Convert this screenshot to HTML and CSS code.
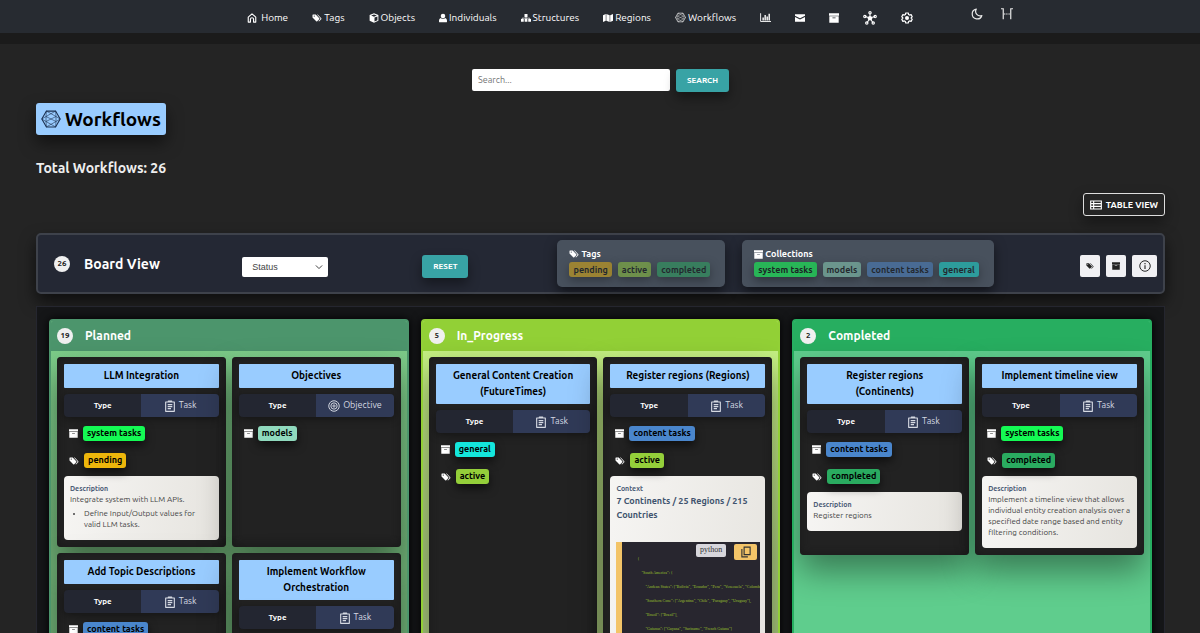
FILE: index.html
```html
<!DOCTYPE html>
<html lang="en">
<head>
    <meta charset="UTF-8">
    <meta name="viewport" content="width=device-width, initial-scale=1.0">
    <title>Workflows</title>
    <link rel="stylesheet" href="styles.css">
</head>
<body>
    <!-- Shared icons -->
    <svg class="sprite" aria-hidden="true">
        <symbol id="i-home" viewBox="0 0 16 16"><path d="M2 6.500 8 1.500l6 5V14.500h-3.500V10a2.500 2.500 0 0 0-5 0v4.500H2z" fill="none" stroke="currentColor" stroke-width="1.800" stroke-linejoin="round"/></symbol>
        <symbol id="i-tags" viewBox="0 0 20 16"><path d="M1 2v5l7.500 7.500q1 .8 2 0l4-4q.8-1 0-2L7.500 1H2q-1 0-1 1zm3.500 1a1.200 1.200 0 1 1 0 2.400 1.200 1.200 0 0 1 0-2.400z" fill="currentColor" fill-rule="evenodd"/><path d="M10 1h1.500l7 7.500q1 1 0 2L14 15l-1-1 3.500-3.500q.8-1 0-2z" fill="currentColor"/></symbol>
        <symbol id="i-cube" viewBox="0 0 16 16"><path d="M8 .5 15 3v9.500L8 15.500 1 12.500V3zM8 2.300 3.500 4 8 5.800 12.500 4zM8.800 7.300v6.200l4.700-2V5.500z" fill="currentColor" fill-rule="evenodd"/></symbol>
        <symbol id="i-user" viewBox="0 0 14 16"><circle cx="7" cy="4.500" r="4" fill="currentColor"/><path d="M3 8q4 3 8 0 3 1 3 4.500V14q0 1.500-1.500 1.500h-11Q0 15.500 0 14v-1.500Q0 9 3 8z" fill="currentColor"/></symbol>
        <symbol id="i-sitemap" viewBox="0 0 20 16"><path d="M7 0h6v6H7zM0 10h5.500v5.500H0zM7.300 10h5.500v5.500H7.300zM14.500 10H20v5.500h-5.500z" fill="currentColor"/><path d="M10 5v6M2.500 11V8.300h15V11" fill="none" stroke="currentColor" stroke-width="1.500"/></symbol>
        <symbol id="i-map" viewBox="0 0 18 16"><path d="M0 3 5 1v12l-5 2zM6 1l6 2v12l-6-2zM13 3l5-2v12l-5 2z" fill="currentColor"/></symbol>
        <symbol id="i-mesh" viewBox="0 0 24 24"><path d="M6.500 2.500h11L23 12l-5.500 9.500h-11L1 12z" fill="none" stroke="currentColor" stroke-width="1.300"/><path d="M6.500 2.500 18 9l5 3-5 3-11.500 6.500L6 15l-5-3 5-3zM17.500 2.500 6 9v6l11.500 6.500L18 15V9zM6 9l12 6M18 9 6 15" fill="none" stroke="currentColor" stroke-width=".7"/></symbol>
        <symbol id="i-chart" viewBox="0 0 18 16"><path d="M1 1v13.500h17" fill="none" stroke="currentColor" stroke-width="1.500"/><path d="M4 8h2.300v5H4zM7.300 4h2.300v9H7.300zM10.600 6.500h2.300V13h-2.300zM13.900 2h2.300v11h-2.300z" fill="currentColor"/></symbol>
        <symbol id="i-mail" viewBox="0 0 16 14"><path d="M0 1h16v2.500l-8 4-8-4zM0 5.500l8 4 8-4V13H0z" fill="currentColor"/></symbol>
        <symbol id="i-archive" viewBox="0 0 16 16"><path d="M0 .5h16v4H0zM.5 5.200h15v10.300H.5zM5.500 7v1.200h5V7z" fill="currentColor" fill-rule="evenodd"/></symbol>
        <symbol id="i-hub" viewBox="0 0 24 24"><path d="M12 12V4M12 12 3.500 9.500M12 12l8.500-2.500M12 12l-5 8M12 12l5 8" stroke="currentColor" stroke-width="1.800"/><circle cx="12" cy="12.500" r="3.800" fill="currentColor"/><g fill="none" stroke="currentColor" stroke-width="2"><circle cx="12" cy="3.200" r="2"/><circle cx="3.200" cy="9.500" r="2"/><circle cx="20.800" cy="9.500" r="2"/><circle cx="6.500" cy="20.500" r="2"/><circle cx="17.500" cy="20.500" r="2"/></g></symbol>
        <symbol id="i-gear" viewBox="0 0 24 24"><path d="M9.500 2h5l.7 3 2 1.200 3-1 2.300 4.200L20.200 12l2.300 2.600-2.300 4.200-3-1-2 1.200-.7 3h-5l-.7-3-2-1.200-3 1-2.300-4.200L3.800 12 1.500 9.400l2.300-4.200 3 1 2-1.200z" fill="none" stroke="currentColor" stroke-width="2.400" stroke-linejoin="round"/><circle cx="12" cy="12" r="4" fill="currentColor"/></symbol>
        <symbol id="i-moon" viewBox="0 0 16 16"><path d="M7 1.500a6.600 6.600 0 1 0 7.500 8.500A6 6 0 0 1 7 1.500z" fill="none" stroke="currentColor" stroke-width="1.600" stroke-linejoin="round"/></symbol>
        <symbol id="i-width" viewBox="0 0 16 16"><path d="M0 1h3v14M16 1h-3v14" fill="none" stroke="currentColor" stroke-width="1.600"/><path d="M4 8h8" stroke="currentColor" stroke-width="1.600" stroke-dasharray="1.500 .8"/></symbol>
        <symbol id="i-table" viewBox="0 0 18 14"><path d="M1 1h16v12H1zM1 5h16M1 9h16M5.500 1v12" fill="none" stroke="currentColor" stroke-width="1.700"/></symbol>
        <symbol id="i-info" viewBox="0 0 16 16"><circle cx="8" cy="8" r="7" fill="none" stroke="currentColor" stroke-width="1.300"/><path d="M8 7v5M8 4v1.500" stroke="currentColor" stroke-width="1.500"/></symbol>
        <symbol id="i-task" viewBox="0 0 16 18"><path d="M1.500 3h13v14h-13zM5.500 3V1.500h5V3M4.500 7h7M4.500 10h7M4.500 13h5" fill="none" stroke="currentColor" stroke-width="1.700" stroke-linejoin="round"/></symbol>
        <symbol id="i-target" viewBox="0 0 16 16"><g fill="none" stroke="currentColor" stroke-width="1.300"><circle cx="8" cy="8" r="7"/><circle cx="8" cy="8" r="4.200"/><circle cx="8" cy="8" r="1.500"/></g></symbol>
        <symbol id="i-copy" viewBox="0 0 16 16"><path d="M5.500 1.500h8v10h-8zM2.500 4v10.500h8" fill="none" stroke="currentColor" stroke-width="1.500"/></symbol>
        <symbol id="i-chevron" viewBox="0 0 16 16"><path d="M3 5.500l5 5 5-5" fill="none" stroke="currentColor" stroke-width="1.600"/></symbol>
    </svg>

    <header class="navbar">
        <nav class="nav-links">
            <a href="#"><svg class="icon"><use href="#i-home"/></svg>&nbsp;Home</a>
            <a href="#"><svg class="icon"><use href="#i-tags"/></svg>Tags</a>
            <a href="#"><svg class="icon"><use href="#i-cube"/></svg>Objects</a>
            <a href="#"><svg class="icon icon-slim"><use href="#i-user"/></svg>Individuals</a>
            <a href="#"><svg class="icon"><use href="#i-sitemap"/></svg>Structures</a>
            <a href="#"><svg class="icon"><use href="#i-map"/></svg>Regions</a>
            <a href="#"><svg class="icon icon-wide"><use href="#i-mesh"/></svg>Workflows</a>
            <a href="#" aria-label="Statistics"><svg class="icon icon-wide"><use href="#i-chart"/></svg></a>
            <a href="#" aria-label="Messages"><svg class="icon"><use href="#i-mail"/></svg></a>
            <a href="#" aria-label="Collections"><svg class="icon"><use href="#i-archive"/></svg></a>
            <a href="#" aria-label="Network"><svg class="icon icon-lg"><use href="#i-hub"/></svg></a>
            <a href="#" aria-label="Settings"><svg class="icon icon-md"><use href="#i-gear"/></svg></a>
        </nav>
        <div class="nav-toggles">
            <button type="button" aria-label="Dark mode"><svg class="icon icon-md"><use href="#i-moon"/></svg></button>
            <button type="button" aria-label="Page width"><svg class="icon icon-md"><use href="#i-width"/></svg></button>
        </div>
    </header>

    <main>
        <form class="search">
            <input type="search" placeholder="Search..." aria-label="Search">
            <button type="submit" class="btn btn-teal">SEARCH</button>
        </form>

        <h1><svg class="icon"><use href="#i-mesh"/></svg>Workflows</h1>
        <h2 class="total">Total Workflows: 26</h2>

        <div class="view-switch">
            <a href="#" class="btn-outline"><svg class="icon"><use href="#i-table"/></svg>TABLE VIEW</a>
        </div>

        <section class="toolbar">
            <div class="toolbar-title">
                <span class="count">26</span>
                <h2>Board View</h2>
            </div>
            <div>
                <div class="select">
                    <select aria-label="Group by">
                        <option>Status</option>
                        <option>Type</option>
                    </select>
                    <svg class="icon"><use href="#i-chevron"/></svg>
                </div>
            </div>
            <div><button type="button" class="btn btn-teal btn-reset">RESET</button></div>
            <div class="filter">
                <h3><svg class="icon"><use href="#i-tags"/></svg>Tags</h3>
                <div class="filter-list">
                    <button type="button" class="tag pending">pending</button>
                    <button type="button" class="tag active">active</button>
                    <button type="button" class="tag completed">completed</button>
                </div>
            </div>
            <div class="filter">
                <h3><svg class="icon icon-sm"><use href="#i-archive"/></svg>Collections</h3>
                <div class="filter-list">
                    <button type="button" class="tag system">system tasks</button>
                    <button type="button" class="tag models">models</button>
                    <button type="button" class="tag content">content tasks</button>
                    <button type="button" class="tag general">general</button>
                </div>
            </div>
            <div class="toolbar-actions">
                <button type="button" aria-label="Toggle tags"><svg class="icon icon-xs"><use href="#i-tags"/></svg></button>
                <button type="button" aria-label="Toggle collections"><svg class="icon icon-xs"><use href="#i-archive"/></svg></button>
                <button type="button" class="info" aria-label="Toggle details"><svg class="icon icon-md"><use href="#i-info"/></svg></button>
            </div>
        </section>

        <section class="board">
            <!-- Planned -->
            <div class="column planned">
                <header><span class="count">19</span><h2>Planned</h2></header>
                <div class="cards">
                    <article class="card">
                        <h3><a href="#">LLM Integration</a></h3>
                        <div class="type"><b>Type</b><span><svg class="icon icon-md"><use href="#i-task"/></svg>Task</span></div>
                        <p class="label"><svg class="icon icon-sm"><use href="#i-archive"/></svg><a href="#" class="tag system">system tasks</a></p>
                        <p class="label"><svg class="icon"><use href="#i-tags"/></svg><a href="#" class="tag pending">pending</a></p>
                        <div class="note">
                            <h4>Description</h4>
                            <p>Integrate system with LLM APIs.</p>
                            <ul>
                                <li>Define Input/Output values for valid LLM tasks.</li>
                            </ul>
                        </div>
                    </article>
                    <article class="card">
                        <h3><a href="#">Objectives</a></h3>
                        <div class="type"><b>Type</b><span><svg class="icon icon-md"><use href="#i-target"/></svg>Objective</span></div>
                        <p class="label"><svg class="icon icon-sm"><use href="#i-archive"/></svg><a href="#" class="tag models">models</a></p>
                    </article>
                    <article class="card">
                        <h3><a href="#">Add Topic Descriptions</a></h3>
                        <div class="type"><b>Type</b><span><svg class="icon icon-md"><use href="#i-task"/></svg>Task</span></div>
                        <p class="label"><svg class="icon icon-sm"><use href="#i-archive"/></svg><a href="#" class="tag content">content tasks</a></p>
                    </article>
                    <article class="card">
                        <h3><a href="#">Implement Workflow Orchestration</a></h3>
                        <div class="type"><b>Type</b><span><svg class="icon icon-md"><use href="#i-task"/></svg>Task</span></div>
                    </article>
                </div>
            </div>

            <!-- In progress -->
            <div class="column in-progress">
                <header><span class="count">5</span><h2>In_Progress</h2></header>
                <div class="cards">
                    <article class="card">
                        <h3><a href="#">General Content Creation (FutureTimes)</a></h3>
                        <div class="type"><b>Type</b><span><svg class="icon icon-md"><use href="#i-task"/></svg>Task</span></div>
                        <p class="label"><svg class="icon icon-sm"><use href="#i-archive"/></svg><a href="#" class="tag general">general</a></p>
                        <p class="label"><svg class="icon"><use href="#i-tags"/></svg><a href="#" class="tag active">active</a></p>
                    </article>
                    <article class="card">
                        <h3><a href="#">Register regions (Regions)</a></h3>
                        <div class="type"><b>Type</b><span><svg class="icon icon-md"><use href="#i-task"/></svg>Task</span></div>
                        <p class="label"><svg class="icon icon-sm"><use href="#i-archive"/></svg><a href="#" class="tag content">content tasks</a></p>
                        <p class="label"><svg class="icon"><use href="#i-tags"/></svg><a href="#" class="tag active">active</a></p>
                        <div class="note">
                            <h4>Context</h4>
                            <h5>7 Continents / 25 Regions / 215 Countries</h5>
                            <div class="code">
                                <div class="code-tools">
                                    <span class="lang">python</span>
                                    <button type="button" aria-label="Copy code"><svg class="icon icon-md"><use href="#i-copy"/></svg></button>
                                </div>
                                <pre>{
    "South America": {
        "Andean States": ["Bolivia", "Ecuador", "Peru", "Venezuela", "Colombia"],
        "Southern Cone": ["Argentina", "Chile", "Paraguay", "Uruguay"],
        "Brazil": ["Brazil"],
        "Guianas": ["Guyana", "Suriname", "French Guiana"]
    }
}</pre>
                            </div>
                        </div>
                    </article>
                </div>
            </div>

            <!-- Completed -->
            <div class="column done">
                <header><span class="count">2</span><h2>Completed</h2></header>
                <div class="cards">
                    <article class="card">
                        <h3><a href="#">Register regions (Continents)</a></h3>
                        <div class="type"><b>Type</b><span><svg class="icon icon-md"><use href="#i-task"/></svg>Task</span></div>
                        <p class="label"><svg class="icon icon-sm"><use href="#i-archive"/></svg><a href="#" class="tag content">content tasks</a></p>
                        <p class="label"><svg class="icon"><use href="#i-tags"/></svg><a href="#" class="tag completed">completed</a></p>
                        <div class="note">
                            <h4>Description</h4>
                            <p>Register regions</p>
                        </div>
                    </article>
                    <article class="card">
                        <h3><a href="#">Implement timeline view</a></h3>
                        <div class="type"><b>Type</b><span><svg class="icon icon-md"><use href="#i-task"/></svg>Task</span></div>
                        <p class="label"><svg class="icon icon-sm"><use href="#i-archive"/></svg><a href="#" class="tag system">system tasks</a></p>
                        <p class="label"><svg class="icon"><use href="#i-tags"/></svg><a href="#" class="tag completed">completed</a></p>
                        <div class="note">
                            <h4>Description</h4>
                            <p>Implement a timeline view that allows individual entity creation analysis over a specified date range based and entity filtering conditions.</p>
                        </div>
                    </article>
                </div>
            </div>
        </section>
    </main>
</body>
</html>
```

FILE: styles.css
```css
* {
    box-sizing: border-box;
}
body {
    margin: 0;
    background-color: #1b1b1b;
    color: #fff;
    font-family: Ubuntu, "Noto Sans", sans-serif;
    font-size: 9px;
    line-height: 16px;
}
h1, h2, h3, h4, h5, p, ul, pre {
    margin: 0;
}
a {
    color: inherit;
    text-decoration: none;
}
button, input, select {
    font-family: inherit;
    border: 0;
    margin: 0;
}
button {
    cursor: pointer;
}

/* Icons */
.sprite {
    display: none;
}
.icon {
    width: 10px;
    height: 10px;
    flex: none;
}
.icon-xs {
    width: 8px;
    height: 8px;
}
.icon-sm {
    width: 9px;
    height: 9px;
}
.icon-slim {
    width: 8px;
}
.icon-wide {
    width: 11px;
    height: 11px;
}
.icon-md {
    width: 12px;
    height: 12px;
}
.icon-lg {
    width: 14px;
    height: 14px;
}

/* Navigation */
.navbar {
    display: grid;
    grid-template-columns: 1fr auto 1fr;
    height: 33px;
    background-color: #272b31;
}
.nav-links {
    grid-column: 2;
    display: flex;
    align-items: center;
    gap: 24px;
    padding-right: 40px;
    padding-top: 2px;
    font-size: 10px;
}
.nav-links a {
    display: flex;
    align-items: center;
    gap: 2px;
}
.nav-toggles {
    display: flex;
    align-items: flex-start;
    gap: 18px;
    padding: 8px 0 0 18px;
}
.nav-toggles button {
    display: flex;
    padding: 0;
    background: none;
    color: #e8e8e8;
}

/* Page */
main {
    margin-top: 11px;
    padding: 25px 35px 35px 36px;
    background-color: #242424;
}
.search {
    display: flex;
    justify-content: center;
    gap: 6px;
}
.search input {
    width: 198px;
    height: 22px;
    padding: 0 6px;
    border-radius: 2px;
    background-color: #fff;
    font-size: 9px;
}
.btn {
    height: 23px;
    padding: 0 11px;
    border-radius: 3px;
    font-size: 8px;
    font-weight: 700;
    box-shadow: 0 6px 12px rgba(0, 0, 0, 0.4);
}
.btn-teal {
    background-color: #38a3a5;
    color: #fff;
}
h1 {
    display: flex;
    align-items: center;
    gap: 4px;
    width: fit-content;
    height: 32px;
    margin-top: 11px;
    padding: 0 5px;
    border-radius: 3px;
    background-color: #99ccff;
    color: #000;
    font-size: 19px;
    box-shadow: 0 8px 16px rgba(0, 0, 0, 0.5);
}
h1 .icon {
    width: 20px;
    height: 20px;
    color: #1c3050;
}
.total {
    margin-top: 25px;
    color: #eee;
    font-size: 14px;
}
.view-switch {
    display: flex;
    justify-content: flex-end;
    margin-top: 17px;
}
.btn-outline {
    display: flex;
    align-items: center;
    gap: 4px;
    height: 23px;
    padding: 0 6px;
    border: 1px solid #ddd;
    border-radius: 3px;
    font-weight: 700;
    box-shadow: 0 6px 14px rgba(0, 0, 0, 0.4);
}
.btn-outline .icon {
    width: 12px;
}

/* Toolbar */
.toolbar {
    display: grid;
    grid-template-columns: 188fr 180fr 118fr auto auto 163fr;
    align-items: center;
    margin-top: 17px;
    padding: 5px 6px 5px 16px;
    border: 2px solid #3e424b;
    border-radius: 5px;
    background-color: #242834;
    box-shadow: 0 8px 16px rgba(0, 0, 0, 0.6);
}
.toolbar-title {
    display: flex;
    align-items: center;
    gap: 14px;
}
.toolbar-title h2 {
    font-size: 14px;
}
.count {
    width: 16px;
    height: 16px;
    border-radius: 50%;
    background-color: #f0f0f0;
    color: #222;
    font-size: 8px;
    font-weight: 700;
    text-align: center;
}
.select {
    display: grid;
    align-items: center;
    width: 86px;
    margin-top: 6px;
}
.select select,
.select .icon {
    grid-area: 1 / 1;
}
.select .icon {
    justify-self: end;
    margin-right: 4px;
    color: #444;
    pointer-events: none;
}
select {
    appearance: none;
    height: 20px;
    padding: 0 10px;
    border-radius: 2px;
    background-color: #fff;
    color: #444;
    font-family: "Liberation Sans", sans-serif;
    font-size: 9px;
}
.btn-reset {
    display: block;
    margin-top: 6px;
}
.filter {
    margin-left: 17px;
    height: 47px;
    padding: 6px 15px 0 12px;
    border-radius: 5px;
    background-color: #48515d;
    box-shadow: 0 5px 12px rgba(0, 0, 0, 0.5);
}
.filter h3 {
    display: flex;
    align-items: center;
    gap: 2px;
    font-size: 9px;
}
.filter-list {
    display: flex;
    gap: 6px;
}
.filter .tag {
    opacity: 0.5;
}
.filter .tag.system {
    opacity: 0.6;
}
.tag {
    display: block;
    height: 15px;
    padding: 0 4px;
    border: 0;
    border-radius: 3px;
    color: #000;
    font-size: 9px;
    font-weight: 700;
    line-height: 14px;
    box-shadow: 0 4px 10px rgba(0, 0, 0, 0.6);
}
.pending { background-color: #edb60b; }
.active { background-color: #94cf3a; }
.completed { background-color: #2aab60; }
.system { background-color: #14fa54; }
.models { background-color: #8fd9bd; }
.content { background-color: #4a86cc; }
.general { background-color: #14e6dc; }
.toolbar-actions {
    display: flex;
    justify-content: flex-end;
    gap: 6px;
    margin-top: 5px;
}
.toolbar-actions button {
    display: flex;
    align-items: center;
    justify-content: center;
    width: 20px;
    height: 22px;
    padding: 0;
    border-radius: 2px;
    background-color: #f0f0f3;
    color: #222;
}
.toolbar-actions .info {
    width: 25px;
}

/* Board */
.board {
    display: grid;
    grid-template-columns: repeat(3, 1fr);
    gap: 12px;
    margin-top: 12px;
    padding: 12px;
    border: 1px solid #25262f;
    background-color: #151618;
}
.column {
    min-width: 0;
    border: 2px solid;
    border-radius: 4px;
    overflow: hidden;
    box-shadow: 0 0 10px #000;
}
.column header {
    display: flex;
    align-items: center;
    gap: 12px;
    height: 30px;
    padding: 0 6px;
}
.column header h2 {
    font-size: 12px;
}
.planned {
    border-color: #4c956c;
    background: linear-gradient(#7fd08c, #70b277 220px);
}
.planned header {
    background-color: #4c956c;
}
.in-progress {
    border-color: #92d036;
    background: linear-gradient(#c8f583, #a9c97c 240px);
}
.in-progress header {
    background-color: #92d036;
}
.done {
    border-color: #27ae60;
    background-color: #5fcd8d;
}
.done header {
    background-color: #27ae60;
}
.cards {
    display: grid;
    grid-template-columns: repeat(2, minmax(0, 1fr));
    gap: 6px;
    padding: 6px;
}
.card {
    padding: 7px;
    border-radius: 4px;
    background-color: #222;
    box-shadow: 0 16px 32px rgba(0, 0, 0, 0.4), inset 0 0 8px #191919;
}
.card h3 {
    padding: 4px 12px;
    border-radius: 1px;
    background-color: #99ccff;
    color: #000;
    font-size: 10px;
    text-align: center;
}
.type {
    display: grid;
    grid-template-columns: 1fr 1fr;
    height: 23px;
    margin-top: 6px;
    margin-bottom: 9px;
    border-radius: 4px;
    overflow: hidden;
    background-color: #232631;
    line-height: 23px;
    text-align: center;
    font-size: 8px;
    box-shadow: 0 2px 8px rgba(0, 0, 0, 0.4);
}
.type span {
    display: flex;
    align-items: center;
    justify-content: center;
    gap: 3px;
    background-color: #303a57;
    color: #d5d9e2;
    font-size: 9px;
}
.label {
    display: flex;
    align-items: center;
    gap: 5px;
    height: 15px;
    margin-bottom: 12px;
    padding-left: 5px;
}
.note {
    margin-top: -4px;
    padding: 6px 5px 10px 6px;
    border-radius: 4px;
    background: linear-gradient(100deg, #f6f5f3, #e6e4df);
    color: #444;
    font-size: 8px;
    line-height: 11px;
}
.note h4 {
    color: #4a5a75;
    font-size: 7px;
    line-height: 12px;
}
.note h5 {
    color: #40536e;
    font-size: 9px;
    line-height: 14px;
}
.note ul {
    margin-top: 3px;
    padding: 0 12px 0 14px;
}

/* Code block */
.code {
    position: relative;
    margin-top: 20px;
    padding: 10px 0 0 15px;
    border-left: 6px solid #f3c468;
    background-color: #28262f;
    overflow: hidden;
}
.code pre {
    color: #9cc22e;
    font-family: "Liberation Serif", serif;
    font-size: 4px;
    line-height: 14px;
}
.code-tools {
    position: absolute;
    top: 2px;
    right: 3px;
    display: flex;
    gap: 8px;
}
.lang {
    height: 13px;
    padding: 0 4px;
    border-radius: 2px;
    background-color: #d7d6dc;
    color: #333;
    font-family: "Liberation Serif", serif;
    font-size: 8px;
    line-height: 11px;
}
.code-tools button {
    display: flex;
    align-items: center;
    justify-content: center;
    width: 23px;
    height: 16px;
    padding: 0;
    border-radius: 2px;
    background-color: #f3c468;
    color: #333;
}
```
